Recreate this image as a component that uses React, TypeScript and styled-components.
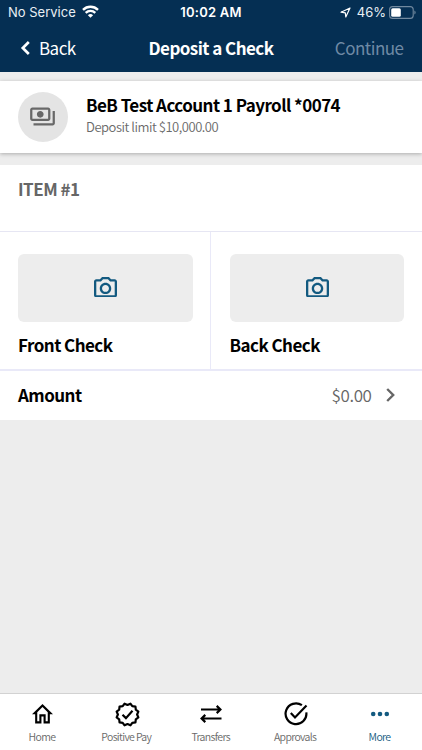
import React from "react";
import styled, { createGlobalStyle } from "styled-components";

const GlobalStyle = createGlobalStyle`
  *, *::before, *::after { box-sizing: border-box; }
  body {
    margin: 0;
    background: #ededed;
    font-family: "Noto Sans CJK SC", "Noto Sans", sans-serif;
    color: #000;
  }
  button { font: inherit; letter-spacing: inherit; background: none; border: 0; padding: 0; }
  svg { display: block; }
`;

const Screen = styled.div`
  display: flex;
  flex-direction: column;
  height: 750px;
  overflow: hidden;
  background: #ededed;
`;

const Header = styled.header`
  flex: none;
  height: 72px;
  background: #052f53;
  color: #fff;
`;

const StatusBar = styled.div`
  display: grid;
  grid-template-columns: 1fr auto 1fr;
  align-items: center;
  height: 24px;
  padding: 0 6px 0 8px;
  font: 400 13px/24px Inter, sans-serif;
  color: #e9eff5;
`;

const StatusGroup = styled.div<{ $end?: boolean }>`
  display: flex;
  align-items: center;
  justify-content: ${(p) => (p.$end ? "flex-end" : "flex-start")};
`;

const WifiIcon = styled.svg`
  margin: 0 0 1px 6px;
`;

const Clock = styled.span`
  margin-right: 2px;
  font-weight: 600;
  letter-spacing: 0.25px;
  color: #fff;
`;

const BatteryLevel = styled.span`
  margin: 0 3px 0 6px;
`;

const NavBar = styled.div`
  display: grid;
  grid-template-columns: 1fr auto 1fr;
  align-items: center;
  height: 47px;
  padding: 0 18.5px 0 20px;
  font-size: 17px;
  line-height: 24px;
  letter-spacing: -0.55px;
`;

const BackButton = styled.button`
  display: flex;
  align-items: center;
  gap: 9px;
  justify-self: start;
  color: #fff;
`;

const Title = styled.h1`
  margin: 0 1.5px 0 0;
  font-size: 17px;
  font-weight: 700;
  letter-spacing: -0.55px;
`;

const ContinueButton = styled.button`
  justify-self: end;
  color: #6f8aa5;
  letter-spacing: -0.5px;
`;

const AccountCard = styled.section`
  flex: none;
  display: flex;
  align-items: center;
  gap: 18px;
  height: 72px;
  margin: 9px 0 12px;
  padding-left: 18px;
  background: #fff;
  box-shadow: 0 1px 4px rgba(0, 0, 0, 0.28);
`;

const AccountBadge = styled.div`
  display: grid;
  place-items: center;
  width: 50px;
  height: 50px;
  border-radius: 50%;
  background: #e4e4e4;
  color: #686868;
`;

const AccountBadgeIcon = styled.svg`
  margin: 0 1px 1px 0;
`;

const AccountText = styled.div`
  padding-bottom: 5px;
`;

const AccountName = styled.div`
  font-size: 17px;
  font-weight: 700;
  line-height: 23px;
  letter-spacing: -0.55px;
`;

const AccountLimit = styled.div`
  font-size: 13px;
  font-weight: 350;
  line-height: 21px;
  letter-spacing: -0.47px;
  color: #6a6a6a;
`;

const ItemHeading = styled.h2`
  flex: none;
  height: 66px;
  margin: 0;
  padding: 11.5px 18px 0;
  background: #fff;
  font-size: 17px;
  font-weight: 700;
  line-height: 24px;
  letter-spacing: -0.5px;
  color: #666;
`;

const Captures = styled.section`
  flex: none;
  display: grid;
  grid-template-columns: 1fr 1fr;
  height: 140px;
  border-top: 1px solid #e6e6f3;
  border-bottom: 2px solid #e9e9f8;
  background: #fff;
`;

const CaptureCell = styled.div`
  padding: 22px 18.5px 0 18px;

  & + & {
    padding: 22px 18px 0 18.5px;
    box-shadow: -1px 0 #e9e9f8;
  }
`;

const CaptureButton = styled.button`
  display: grid;
  place-items: center;
  width: 100%;
  height: 67.5px;
  padding: 0 0 1.5px 0.5px;
  border-radius: 6px;
  background: #ededed;
  color: #135a80;
`;

const Label = styled.div`
  font-size: 17px;
  font-weight: 700;
  line-height: 24px;
  letter-spacing: -0.54px;
`;

const CaptureLabel = styled(Label)`
  margin-top: 11.5px;
`;

const AmountRow = styled.section`
  flex: none;
  display: flex;
  align-items: center;
  height: 49px;
  padding: 0 27px 1px 18px;
  background: #fff;
`;

const AmountValue = styled.span`
  margin: 0 14.5px 0 auto;
  font-size: 17px;
  font-weight: 350;
  line-height: 24px;
  letter-spacing: -0.4px;
  color: #666;
`;

const TabBar = styled.nav`
  flex: none;
  display: grid;
  grid-template-columns: repeat(5, 1fr);
  height: 57px;
  margin-top: auto;
  border-top: 1px solid #d2d2d2;
  background: #fff;
`;

const Tab = styled.button<{ $active?: boolean }>`
  display: flex;
  flex-direction: column;
  align-items: center;
  padding-top: 7px;
  color: ${(p) => (p.$active ? "#135a80" : "#000")};
`;

const TabIcon = styled.span`
  display: grid;
  place-items: center;
  height: 26px;
  padding-left: 1px;
`;

const TabLabel = styled.span<{ $active?: boolean }>`
  margin: 2px 0.6px 0 0;
  font-size: 10.5px;
  font-weight: 350;
  line-height: 16px;
  letter-spacing: -0.65px;
  color: ${(p) => (p.$active ? "#135a80" : "#686868")};
`;

const Camera = () => (
  <svg width="23" height="20.5" viewBox="2 3 20 18" preserveAspectRatio="none" fill="currentColor">
    <path d="M20 5h-3.17L15 3H9L7.17 5H4c-1.1 0-2 .9-2 2v12c0 1.1.9 2 2 2h16c1.1 0 2-.9 2-2V7c0-1.1-.9-2-2-2zm0 14H4V7h4.05l1.83-2h4.24l1.83 2H20v12zM12 8c-2.76 0-5 2.24-5 5s2.24 5 5 5 5-2.24 5-5-2.24-5-5-5zm0 8c-1.65 0-3-1.35-3-3s1.35-3 3-3 3 1.35 3 3-1.35 3-3 3z" />
  </svg>
);

const Home = () => (
  <svg width="21" height="19.5" viewBox="2 3 20 17" preserveAspectRatio="none" fill="currentColor">
    <path d="M12 5.69l5 4.5V18h-2v-6H9v6H7v-7.81l5-4.5M12 3L2 12h3v8h6v-6h2v6h6v-8h3L12 3z" />
  </svg>
);

/* Twelve-lobed seal outline, drawn around a 12,12 centre. */
const sealPath =
  Array.from({ length: 24 }, (_, i) => {
    const r = i % 2 ? 9.2 : 10.8;
    const a = ((i * 15 - 75) * Math.PI) / 180;
    return `${i ? "L" : "M"}${(12 + r * Math.cos(a)).toFixed(2)} ${(12 + r * Math.sin(a)).toFixed(2)}`;
  }).join("") + "Z";

const Seal = () => (
  <svg width="25" height="25" viewBox="0 0 24 24" fill="none" stroke="currentColor" strokeWidth="2.1" strokeLinejoin="round">
    <path d={sealPath} />
    <path d="M7.2 12.2l3.3 3.3 6.3-7" strokeLinejoin="miter" />
  </svg>
);

const Transfer = () => (
  <svg width="22" height="18" viewBox="0 0 22 18" fill="none" stroke="currentColor" strokeWidth="2.2">
    <path d="M1 4.5h19M16.7.9L20.4 4.5l-3.7 3.6M21.5 13.5H2M5.3 9.9L1.6 13.5l3.7 3.6" />
  </svg>
);

const Approve = () => (
  <svg width="24" height="24" viewBox="0 0 24 24" fill="none" stroke="currentColor" strokeWidth="2.2">
    <path d="M17.9 3.2A10.4 10.4 0 1 0 22.3 10.4" />
    <path d="M6.8 11l4.2 4.4L22.5 3.6" />
  </svg>
);

const Dots = () => (
  <svg width="20" height="6" viewBox="0 0 20 6" fill="currentColor">
    <circle cx="3.2" cy="3" r="2.3" />
    <circle cx="10" cy="3" r="2.3" />
    <circle cx="16.8" cy="3" r="2.3" />
  </svg>
);

const tabs = [
  { label: "Home", Icon: Home },
  { label: "Positive Pay", Icon: Seal },
  { label: "Transfers", Icon: Transfer },
  { label: "Approvals", Icon: Approve },
  { label: "More", Icon: Dots, active: true },
];

export default function App() {
  return (
    <>
      <GlobalStyle />
      <Screen>
        <Header>
          <StatusBar>
            <StatusGroup>
              No Service
              <WifiIcon width="17" height="13" viewBox="0 0 17 13" fill="none" stroke="#fff" strokeWidth="2.4">
                <path d="M1 4.8a10.8 10.8 0 0 1 15 0M3.7 7.8a7 7 0 0 1 9.6 0" />
                <path d="M8.5 12.8L5.9 10.2a3.8 3.8 0 0 1 5.2 0z" fill="#fff" stroke="none" />
              </WifiIcon>
            </StatusGroup>
            <Clock>10:02 AM</Clock>
            <StatusGroup $end>
              <svg width="11" height="11" viewBox="0 0 11 11" fill="none" stroke="#fff" strokeWidth="1.2" strokeLinejoin="round">
                <path d="M10 1L1 5.2l4.3.6.5 4.2z" />
              </svg>
              <BatteryLevel>46%</BatteryLevel>
              <svg width="27" height="13" viewBox="0 0 27 13">
                <rect x=".6" y=".6" width="23.6" height="11.8" rx="3" fill="none" stroke="#71899f" strokeWidth="1.1" />
                <rect x="2.2" y="2.2" width="9.6" height="8.6" rx="1.5" fill="#fff" />
                <path d="M25.4 4.5v4q1.2-.6 1.2-2t-1.2-2z" fill="#71899f" />
              </svg>
            </StatusGroup>
          </StatusBar>
          <NavBar>
            <BackButton>
              <svg width="10" height="14" viewBox="0 0 10 14" fill="none" stroke="#fff" strokeWidth="2.7">
                <path d="M8.8 1L2.8 7l6 6" />
              </svg>
              Back
            </BackButton>
            <Title>Deposit a Check</Title>
            <ContinueButton>Continue</ContinueButton>
          </NavBar>
        </Header>

        <AccountCard>
          <AccountBadge>
            <AccountBadgeIcon width="27" height="27" viewBox="0 0 24 24" fill="currentColor">
              <path d="M19 14V6c0-1.1-.9-2-2-2H3c-1.1 0-2 .9-2 2v8c0 1.1.9 2 2 2h14c1.1 0 2-.9 2-2zm-2 0H3V6h14v8zm-7-7c-1.66 0-3 1.34-3 3s1.34 3 3 3 3-1.34 3-3-1.34-3-3-3zm13 0v11c0 1.1-.9 2-2 2H4v-2h17V7h2z" />
            </AccountBadgeIcon>
          </AccountBadge>
          <AccountText>
            <AccountName>BeB Test Account 1 Payroll *0074</AccountName>
            <AccountLimit>Deposit limit $10,000.00</AccountLimit>
          </AccountText>
        </AccountCard>

        <ItemHeading>ITEM #1</ItemHeading>
        <Captures>
          {["Front Check", "Back Check"].map((side) => (
            <CaptureCell key={side}>
              <CaptureButton aria-label={side}>
                <Camera />
              </CaptureButton>
              <CaptureLabel>{side}</CaptureLabel>
            </CaptureCell>
          ))}
        </Captures>
        <AmountRow>
          <Label>Amount</Label>
          <AmountValue>$0.00</AmountValue>
          <svg width="9" height="14" viewBox="0 0 9 14" fill="none" stroke="#666" strokeWidth="2.4">
            <path d="M1.2 1l6 6-6 6" />
          </svg>
        </AmountRow>

        <TabBar>
          {tabs.map(({ label, Icon, active }) => (
            <Tab key={label} $active={active}>
              <TabIcon>
                <Icon />
              </TabIcon>
              <TabLabel $active={active}>{label}</TabLabel>
            </Tab>
          ))}
        </TabBar>
      </Screen>
    </>
  );
}
